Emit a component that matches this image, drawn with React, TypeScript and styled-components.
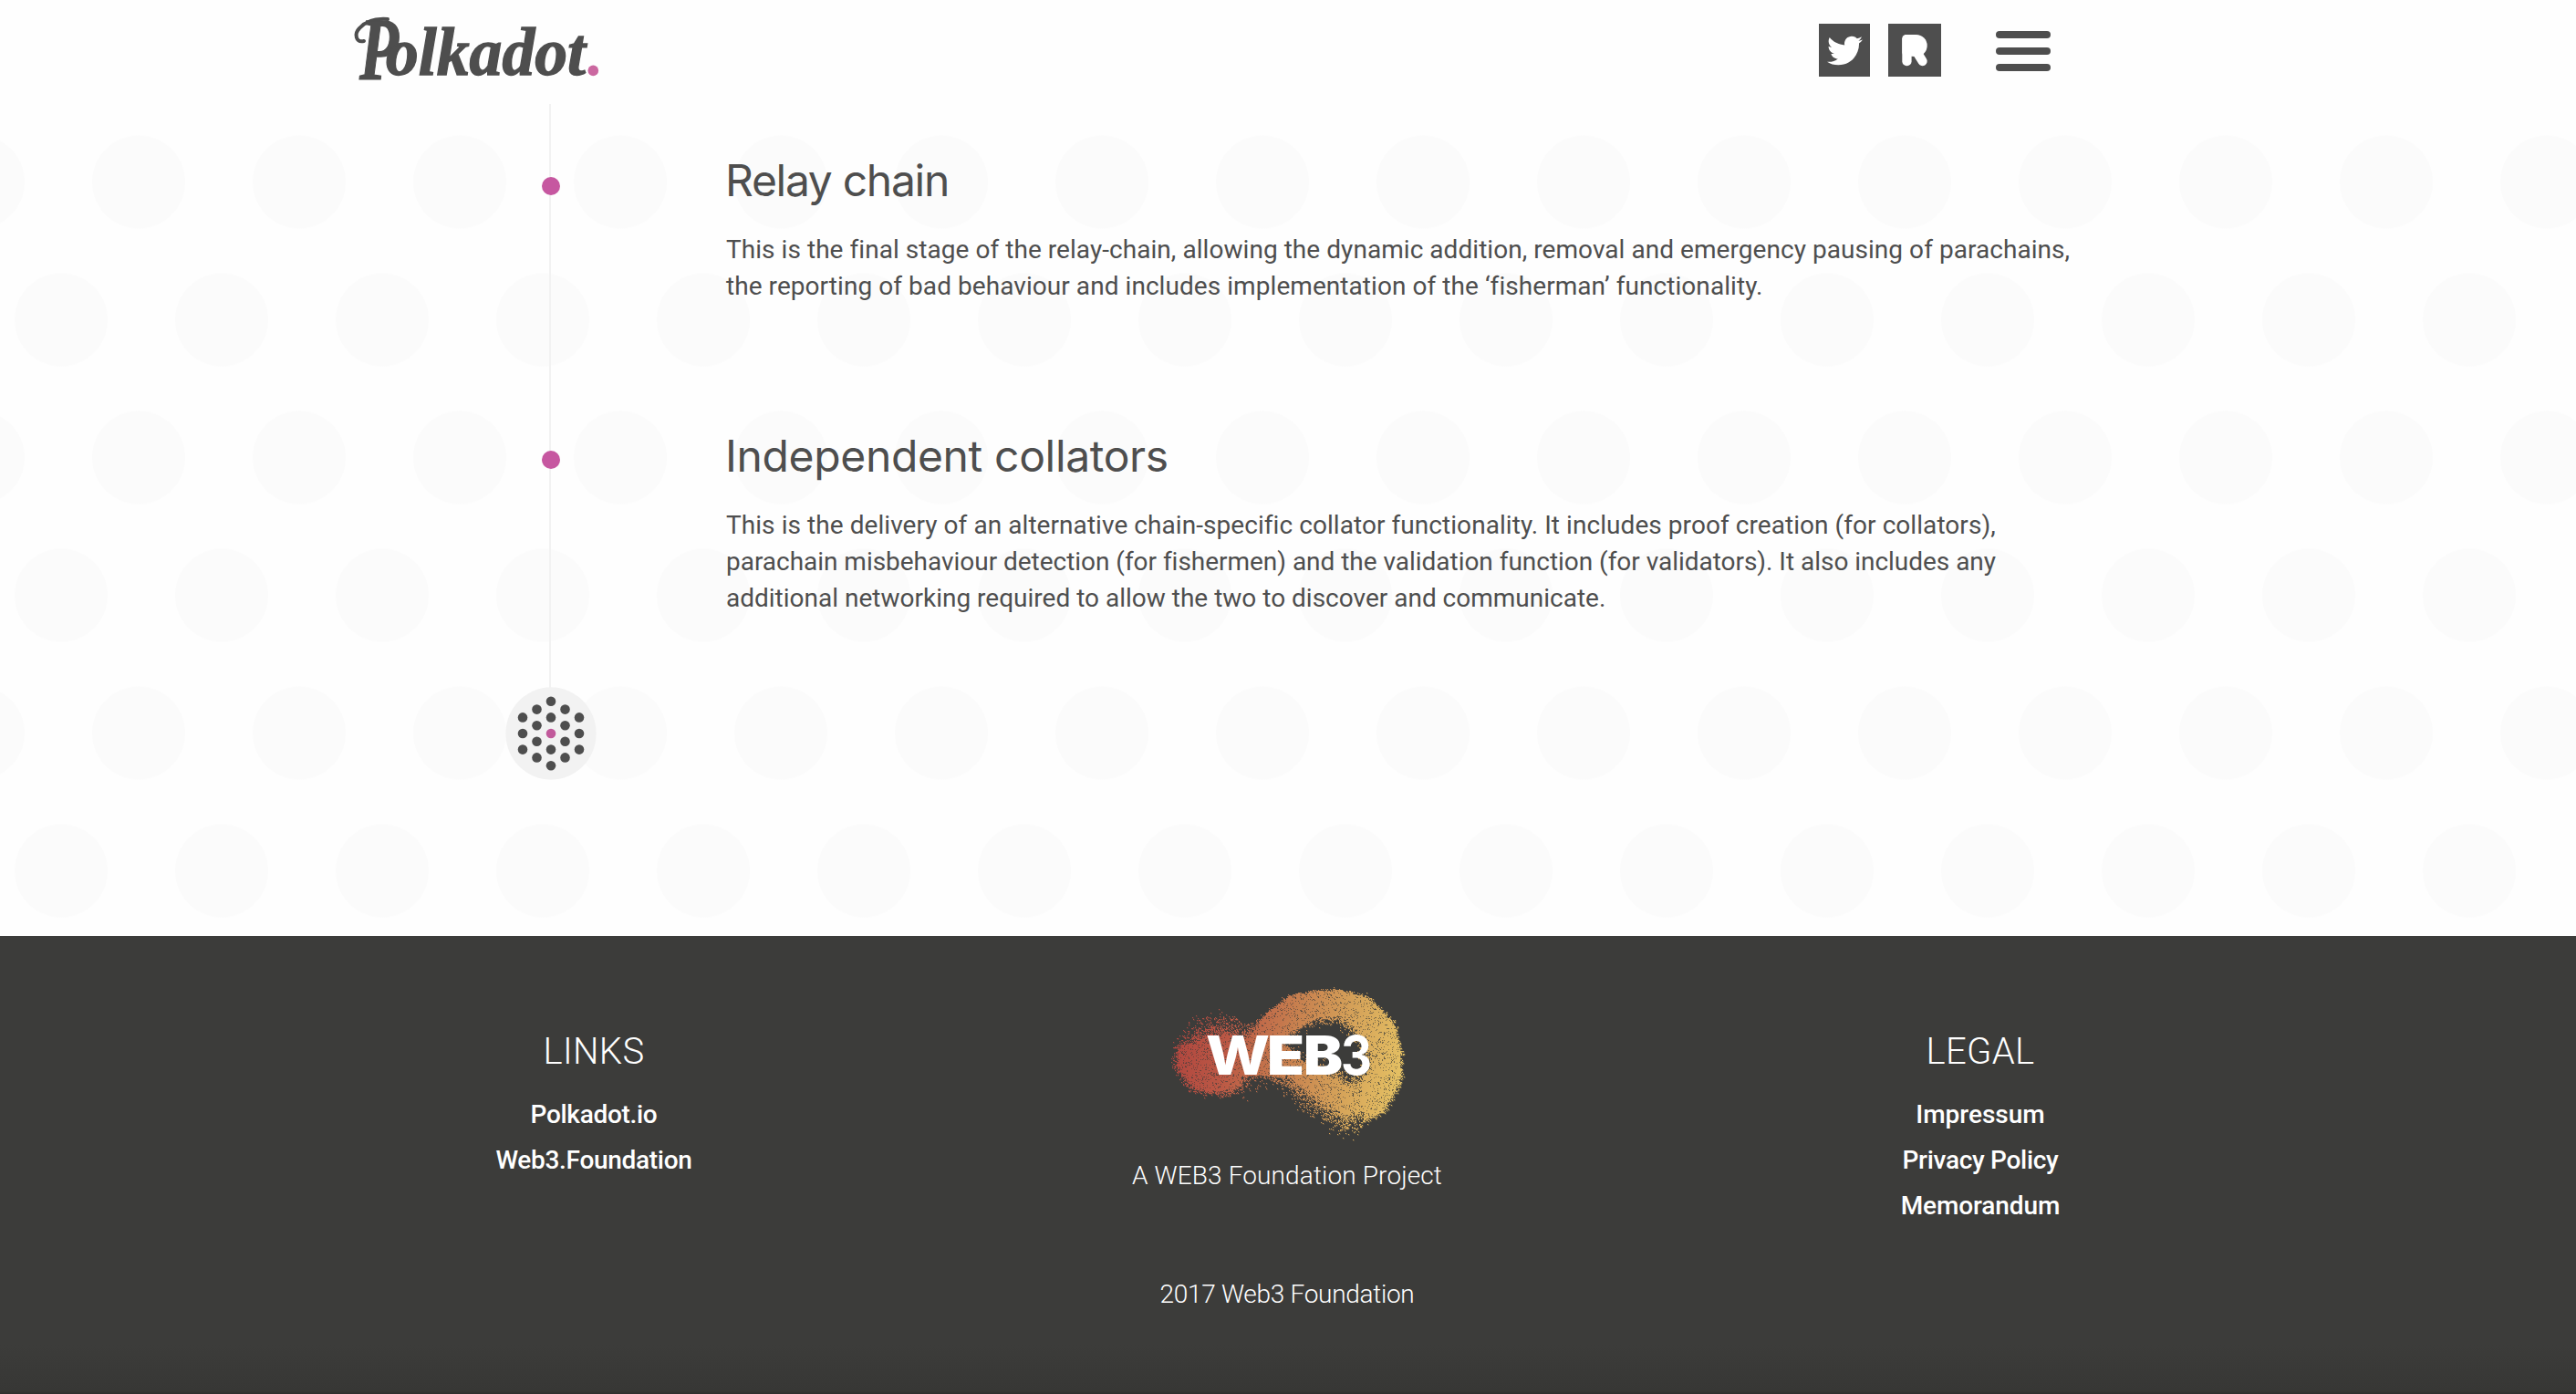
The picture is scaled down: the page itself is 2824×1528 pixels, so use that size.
import React, { useMemo } from "react";
import styled, { createGlobalStyle } from "styled-components";
import { FaTwitter } from "react-icons/fa";

const ink = "#4e4e4e";
const pink = "#c657a0";

const GlobalStyle = createGlobalStyle`
  *, *::before, *::after { box-sizing: border-box; }
  body {
    margin: 0;
    background: #fefefe;
    color: ${ink};
    font-family: Roboto, "Liberation Sans", sans-serif;
    overflow: hidden;
  }
  h2, h3, p { margin: 0; padding: 0; font-weight: inherit; }
  a { color: inherit; text-decoration: none; }
`;

const Page = styled.div`
  display: flex;
  flex-direction: column;
  width: 2824px;
  height: 1528px;
`;

const Header = styled.header`
  display: flex;
  align-items: flex-start;
  height: 114px;
  padding: 0 576px 0 380px;
`;

const LogoLink = styled.a`
  display: block;
  height: 114px;
  margin-right: auto;
`;

const LogoArt = styled.svg`
  display: block;
  overflow: visible;
`;

const LogoText = styled.text`
  font-family: "Liberation Serif", "Times New Roman", serif;
  font-weight: 700;
  font-style: italic;
  fill: ${ink};
  stroke: ${ink};
  stroke-width: 1.4px;
`;

const Nav = styled.nav`
  display: flex;
  align-items: flex-start;
  gap: 20px;
  padding-top: 26px;
`;

const SocialLink = styled.a<{ $width: number }>`
  display: flex;
  align-items: center;
  justify-content: center;
  width: ${(p) => p.$width}px;
  height: 58px;
  background: ${ink};
  color: #fff;
`;

const MenuButton = styled.button`
  display: flex;
  flex-direction: column;
  gap: 10px;
  width: 60px;
  margin: 8px 0 0 40px;
  padding: 0;
  border: 0;
  background: none;
`;

const MenuBar = styled.span`
  height: 8px;
  border-radius: 4px;
  background: ${ink};
`;

const Roadmap = styled.main`
  display: grid;
  grid-template-columns: 100px 1600px;
  column-gap: 144px;
  height: 912px;
  padding-left: 553px;
  background-image: radial-gradient(circle at 88px 88px, #fbfbfb 50.5px, transparent 51.5px),
    radial-gradient(circle at 88px 88px, #fbfbfb 50.5px, transparent 51.5px);
  background-size: 176px 302px;
  background-position: 64px -2.5px, -21px 148.5px;
`;

const Rail = styled.div`
  display: flex;
  flex-direction: column;
  align-items: center;
  padding-top: 80px;
  background: linear-gradient(#f2f2f2, #f2f2f2) 49px 0 / 2px 660px no-repeat;
`;

const Milestone = styled.span<{ $gap: number }>`
  flex: none;
  width: 20px;
  height: 20px;
  margin: 0 0 ${(p) => p.$gap}px 1px;
  border-radius: 50%;
  background: ${pink};
`;

const EndMark = styled.svg`
  display: block;
  flex: none;
  margin-left: 1px;
`;

const Stages = styled.div`
  display: flex;
  flex-direction: column;
  gap: 136px;
  padding-top: 54px;
`;

const StageTitle = styled.h2<{ $tracking: number }>`
  margin: 0 0 26px -2px;
  font-family: Inter, "Liberation Sans", sans-serif;
  font-size: 48px;
  line-height: 60px;
  letter-spacing: ${(p) => p.$tracking}px;
`;

const StageText = styled.p`
  margin-left: -1px;
  font-size: 28px;
  line-height: 40px;
  font-weight: 400;
`;

const Line = styled.span<{ $tracking: number }>`
  display: block;
  white-space: nowrap;
  letter-spacing: ${(p) => p.$tracking}px;
`;

const Footer = styled.footer`
  display: grid;
  grid-template-columns: repeat(3, 760px);
  align-items: start;
  height: 502px;
  padding-left: 271px;
  color: #fff;
  background: linear-gradient(#3c3c3a 448px, #373735 499px, #2f2f2e 502px);
`;

const FooterColumn = styled.section`
  display: flex;
  flex-direction: column;
  align-items: center;
  padding-top: 102px;
`;

const FooterTitle = styled.h3<{ $tracking: number }>`
  margin-bottom: 19px;
  font-size: 40px;
  line-height: 50px;
  font-weight: 300;
  letter-spacing: ${(p) => p.$tracking}px;
`;

const FooterLink = styled.a<{ $tracking: number }>`
  font-size: 28px;
  line-height: 50px;
  font-weight: 500;
  letter-spacing: ${(p) => p.$tracking}px;
`;

const Foundation = styled.section`
  display: flex;
  flex-direction: column;
  align-items: center;
  padding-top: 34px;
`;

const CloudArt = styled.svg`
  display: block;
  margin: 0 2px 9px 0;
`;

const CloudText = styled.text<{ $weight: number }>`
  font-family: Inter, "Liberation Sans", sans-serif;
  font-weight: ${(p) => p.$weight};
  font-size: 58.5px;
  fill: #fff;
`;

const Caption = styled.p<{ $tracking: number; $gap: number }>`
  margin-bottom: ${(p) => p.$gap}px;
  font-size: 28px;
  line-height: 40px;
  font-weight: 350;
  letter-spacing: ${(p) => p.$tracking}px;
`;

const stages = [
  {
    title: "Relay chain",
    tracking: -1.3,
    lines: [
      { text: "This is the final stage of the relay-chain, allowing the dynamic addition, removal and emergency pausing of parachains,", tracking: 0.05 },
      { text: "the reporting of bad behaviour and includes implementation of the ‘fisherman’ functionality.", tracking: 0.06 },
    ],
  },
  {
    title: "Independent collators",
    tracking: -0.35,
    lines: [
      { text: "This is the delivery of an alternative chain-specific collator functionality. It includes proof creation (for collators),", tracking: 0.06 },
      { text: "parachain misbehaviour detection (for fishermen) and the validation function (for validators). It also includes any", tracking: -0.03 },
      { text: "additional networking required to allow the two to discover and communicate.", tracking: 0 },
    ],
  },
];

const columns = {
  links: [
    { label: "Polkadot.io", tracking: -0.3 },
    { label: "Web3.Foundation", tracking: -0.3 },
  ],
  legal: [
    { label: "Impressum", tracking: 0 },
    { label: "Privacy Policy", tracking: -0.3 },
    { label: "Memorandum", tracking: -0.1 },
  ],
};

function PolkadotLogo() {
  return (
    <LogoArt width="280" height="114" viewBox="380 0 280 114" role="img" aria-label="Polkadot.">
      <path
        d="M399 45C390 47 388 37 394 31C401 23 412 20 425 21"
        fill="none"
        stroke={ink}
        strokeWidth="4"
        strokeLinecap="round"
      />
      <LogoText>
        <tspan x="394" y="87" fontSize="98" textLength="43" lengthAdjust="spacingAndGlyphs">
          P
        </tspan>
        <tspan x="423" y="82" fontSize="74" textLength="219" lengthAdjust="spacingAndGlyphs">
          olkadot
        </tspan>
      </LogoText>
      <circle cx="650.3" cy="77.4" r="5.8" fill="#cb68a0" />
    </LogoArt>
  );
}

function RiotIcon() {
  return (
    <svg width="58" height="58" viewBox="0 0 58 58" fill="currentColor">
      <rect x="15.3" y="12" width="10.3" height="34.2" rx="5" />
      <rect x="15.3" y="12" width="18" height="23.8" rx="4.5" />
      <rect x="18.7" y="12" width="24" height="24" rx="12" />
      <line x1="32" y1="32" x2="37.6" y2="41.1" stroke="currentColor" strokeWidth="10.2" strokeLinecap="round" />
    </svg>
  );
}

const markDots: [number, number][] = [-2, -1, 0, 1, 2].flatMap((col) => {
  const count = 5 - Math.abs(col);
  return Array.from({ length: count }, (_, i): [number, number] => [col * 15.5, (i - (count - 1) / 2) * 17.6]);
});

function PolkadotMark() {
  return (
    <EndMark width="100" height="102" viewBox="-50 -51 100 102">
      <ellipse rx="49.6" ry="50.7" fill="#f2f2f2" />
      {markDots.map(([x, y]) => (
        <circle key={`${x}:${y}`} cx={x} cy={y} r="5.3" fill={x === 0 && y === 0 ? "#c15a9b" : ink} />
      ))}
    </EndMark>
  );
}

/* Centreline of the particle cloud: x, y, half-width. */
const spine: [number, number, number][] = [
  [106, 100, 42],
  [117, 98, 45],
  [150, 90, 26],
  [172, 68, 18],
  [200, 49, 21],
  [222, 43, 20],
  [245, 42, 20],
  [268, 51, 24],
  [288, 72, 25],
  [295, 95, 24],
  [294, 118, 25],
  [280, 140, 27],
  [257, 148, 31],
  [225, 130, 27],
  [195, 112, 22],
  [160, 94, 27],
  [125, 96, 42],
];

function buildCloud(width: number, height: number) {
  let seed = 20171;
  const random = () => {
    seed = (seed * 1664525 + 1013904223) % 4294967296;
    return seed / 4294967296;
  };
  const coverage = (x: number, y: number) => {
    let nearest = 9;
    for (let i = 1; i < spine.length; i++) {
      const [ax, ay, ar] = spine[i - 1];
      const [bx, by, br] = spine[i];
      const dx = bx - ax;
      const dy = by - ay;
      const t = Math.max(0, Math.min(1, ((x - ax) * dx + (y - ay) * dy) / (dx * dx + dy * dy)));
      const d = Math.hypot(x - ax - t * dx, y - ay - t * dy) / (ar + t * (br - ar));
      nearest = Math.min(nearest, d);
    }
    const insideRing = Math.hypot((x - 240) / 46, (y - 95) / 42) < 1;
    const trailing = y > 118 && x > 140 && x < 275 && y > 90 + (x - 140) * 0.45;
    const top = y < 85 && x < 160;
    const soft = insideRing || trailing || top;
    const start = trailing ? 0.35 : soft ? 0.45 : 0.8;
    const end = trailing ? 1.4 : soft ? 1.25 : 1.08;
    const fade = Math.max(0, Math.min(1, (end - nearest) / (end - start)));
    return 0.88 * fade * fade;
  };
  let path = "";
  for (let y = 0; y < height; y++) {
    let run = 0;
    for (let x = 0; x <= width; x++) {
      if (x < width && random() < coverage(x, y)) {
        run++;
      } else if (run) {
        path += `M${x - run} ${y + 0.5}h${run}`;
        run = 0;
      }
    }
  }
  return path;
}

function Web3Logo() {
  const cloud = useMemo(() => buildCloud(380, 200), []);
  return (
    <CloudArt width="380" height="200" viewBox="0 0 380 200" role="img" aria-label="WEB3">
      <defs>
        <linearGradient id="ember" gradientUnits="userSpaceOnUse" x1="64" y1="80" x2="318" y2="125">
          <stop offset="0" stopColor="#b8463f" />
          <stop offset="0.24" stopColor="#c45a46" />
          <stop offset="0.5" stopColor="#d08450" />
          <stop offset="0.75" stopColor="#e0aa5b" />
          <stop offset="1" stopColor="#f0cb66" />
        </linearGradient>
      </defs>
      <path d={cloud} stroke="url(#ember)" strokeWidth="1" fill="none" opacity="0.88" />
      <path d={cloud} stroke="url(#ember)" strokeWidth="1" fill="none" opacity="0.55" transform="translate(0.6 0.6)" />
      <CloudText $weight={800} x="102" y="117.7" textLength="70" lengthAdjust="spacingAndGlyphs">
        W
      </CloudText>
      <CloudText $weight={900} x="169" y="117.7" textLength="41" lengthAdjust="spacingAndGlyphs">
        E
      </CloudText>
      <CloudText $weight={900} x="209" y="117.7" textLength="43" lengthAdjust="spacingAndGlyphs">
        B
      </CloudText>
      <CloudText $weight={750} x="250" y="117.7" textLength="34" lengthAdjust="spacingAndGlyphs">
        3
      </CloudText>
    </CloudArt>
  );
}

export default function App() {
  return (
    <Page>
      <GlobalStyle />
      <Header>
        <LogoLink href="#">
          <PolkadotLogo />
        </LogoLink>
        <Nav>
          <SocialLink href="#" aria-label="Twitter" $width={56}>
            <FaTwitter size={39} />
          </SocialLink>
          <SocialLink href="#" aria-label="Riot" $width={58}>
            <RiotIcon />
          </SocialLink>
          <MenuButton aria-label="Menu">
            <MenuBar />
            <MenuBar />
            <MenuBar />
          </MenuButton>
        </Nav>
      </Header>

      <Roadmap>
        <Rail>
          <Milestone $gap={280} />
          <Milestone $gap={239} />
          <PolkadotMark />
        </Rail>
        <Stages>
          {stages.map((stage) => (
            <article key={stage.title}>
              <StageTitle $tracking={stage.tracking}>{stage.title}</StageTitle>
              <StageText>
                {stage.lines.map((line) => (
                  <Line key={line.text} $tracking={line.tracking}>
                    {line.text}
                  </Line>
                ))}
              </StageText>
            </article>
          ))}
        </Stages>
      </Roadmap>

      <Footer>
        <FooterColumn>
          <FooterTitle $tracking={0.4}>LINKS</FooterTitle>
          {columns.links.map((link) => (
            <FooterLink key={link.label} href="#" $tracking={link.tracking}>
              {link.label}
            </FooterLink>
          ))}
        </FooterColumn>
        <Foundation>
          <Web3Logo />
          <Caption $tracking={0.12} $gap={90}>
            A WEB3 Foundation Project
          </Caption>
          <Caption $tracking={-0.3} $gap={0}>
            2017 Web3 Foundation
          </Caption>
        </Foundation>
        <FooterColumn>
          <FooterTitle $tracking={0.3}>LEGAL</FooterTitle>
          {columns.legal.map((link) => (
            <FooterLink key={link.label} href="#" $tracking={link.tracking}>
              {link.label}
            </FooterLink>
          ))}
        </FooterColumn>
      </Footer>
    </Page>
  );
}
